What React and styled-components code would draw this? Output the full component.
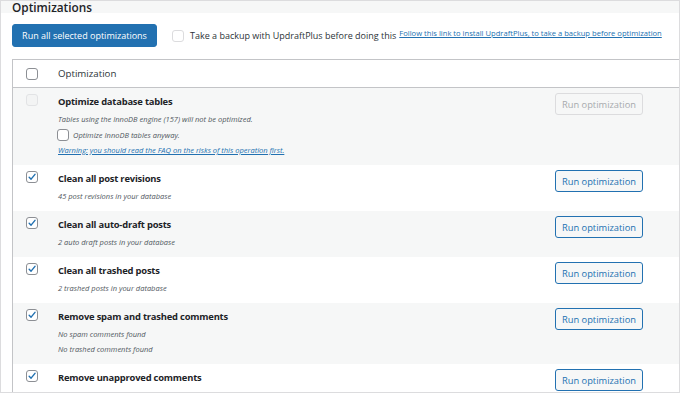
import React from "react";
import styled, { createGlobalStyle } from "styled-components";

const Global = createGlobalStyle`
  html, body { margin: 0; padding: 0; background: #fff; }
  body { font-family: "Open Sans", "Noto Sans", sans-serif; color: #1d2327; }
  * { box-sizing: border-box; }
`;

const Frame = styled.div`
  width: 680px;
  height: 393px;
  overflow: hidden;
  border: 1px solid #dcdcde;
  background: #fff;
  display: flex;
  flex-direction: column;
`;

const TitleBand = styled.div`
  flex: none;
  height: 12px;
  background: #f6f7f7;
  padding-left: 11px;
`;

const Title = styled.h2`
  margin: 0;
  font-size: 11.8px;
  font-weight: 600;
  line-height: 12px;
  color: #1d2327;
`;

const Actions = styled.div`
  flex: none;
  display: flex;
  align-items: flex-start;
  padding: 11px 0 0 11px;
  height: 46px;
`;

const PrimaryButton = styled.button`
  flex: none;
  height: 23px;
  width: 145px;
  background: #2271b1;
  border: 1px solid #2271b1;
  border-radius: 3px;
  color: #fff;
  font-family: inherit;
  font-size: 9px;
  white-space: nowrap;
  padding: 0;
  margin-right: 15px;
`;

const BackupLabel = styled.label`
  flex: none;
  display: flex;
  align-items: center;
  height: 23px;
  font-size: 9px;
  color: #2c3338;
  white-space: nowrap;
`;

const TopLink = styled.a`
  flex: none;
  font-size: 7.6px;
  color: #2271b1;
  text-decoration: underline;
  white-space: nowrap;
  margin-left: 3px;
  line-height: 23px;
  position: relative;
  top: -2px;
`;

const Box = styled.span`
  width: ${(p) => p.$size || 12}px;
  height: ${(p) => p.$size || 12}px;
  flex: none;
  border: 1px solid ${(p) => (p.$disabled ? "#e2e3e5" : p.$faint ? "#dcdcde" : "#8c8f94")};
  border-radius: 3px;
  background: ${(p) => (p.$disabled ? "#f3f4f4" : "#fff")};
  display: inline-flex;
  align-items: center;
  justify-content: center;
  margin-right: ${(p) => p.$gap || 0}px;
`;

const Table = styled.div`
  flex: none;
  margin-left: 11px;
  margin-right: -22px;
  border: 1px solid #c3c4c7;
  border-bottom: none;
`;

const Head = styled.div`
  display: grid;
  grid-template-columns: 32px 1fr;
  align-items: center;
  height: 28px;
  padding-left: 13px;
  border-bottom: 1px solid #c3c4c7;
  font-size: 9.7px;
  color: #2c3338;
`;

const Row = styled.div`
  display: grid;
  grid-template-columns: 32px 1fr auto;
  padding: 6px 57px 7px 13px;
  background: ${(p) => (p.$alt ? "#f6f7f7" : "#fff")};
`;

const Content = styled.div`
  display: flex;
  flex-direction: column;
`;

const RowTitle = styled.div`
  font-size: 9.4px;
  font-weight: 700;
  letter-spacing: -0.2px;
  line-height: 16px;
  color: #1d2327;
  margin-bottom: 2px;
`;

const Sub = styled.div`
  font-size: 7.5px;
  font-style: italic;
  line-height: 15px;
  color: #50575e;
  display: flex;
  align-items: center;
`;

const SubCheck = styled(Sub)`
  line-height: 16px;
  margin-left: -1px;
`;

const SubLink = styled.a`
  font-size: 7.5px;
  font-style: italic;
  line-height: 15px;
  color: #2271b1;
  text-decoration: underline;
`;

const RunButton = styled.button`
  width: 88px;
  height: 22px;
  margin-top: -1px;
  border: 1px solid ${(p) => (p.disabled ? "#dcdcde" : "#2271b1")};
  border-radius: 3px;
  background: #f6f7f7;
  color: ${(p) => (p.disabled ? "#a7aaad" : "#2271b1")};
  font-family: inherit;
  font-size: 9.3px;
  white-space: nowrap;
  padding: 0;
`;

const Check = () => (
  <svg width="12" height="12" viewBox="0 0 12 12">
    <path d="M2.6 6.2 L4.9 8.6 L9.6 2.8" fill="none" stroke="#2271b1" strokeWidth="1.7" strokeLinecap="round" strokeLinejoin="round" />
  </svg>
);

const rows = [
  { title: "Clean all post revisions", subs: ["45 post revisions in your database"] },
  { title: "Clean all auto-draft posts", subs: ["2 auto draft posts in your database"] },
  { title: "Clean all trashed posts", subs: ["2 trashed posts in your database"] },
  { title: "Remove spam and trashed comments", subs: ["No spam comments found", "No trashed comments found"] },
  { title: "Remove unapproved comments", subs: [] },
];

export default function App() {
  return (
    <>
      <Global />
      <Frame>
        <TitleBand>
          <Title>Optimizations</Title>
        </TitleBand>
        <Actions>
          <PrimaryButton>Run all selected optimizations</PrimaryButton>
          <BackupLabel>
            <Box $faint $gap={6} />
            Take a backup with UpdraftPlus before doing this
          </BackupLabel>
          <TopLink href="#">Follow this link to install UpdraftPlus, to take a backup before optimization</TopLink>
        </Actions>
        <Table>
          <Head>
            <Box />
            <span>Optimization</span>
          </Head>
          <Row $alt>
            <Box $disabled />
            <Content>
              <RowTitle>Optimize database tables</RowTitle>
              <Sub>Tables using the InnoDB engine (157) will not be optimized.</Sub>
              <SubCheck>
                <Box $gap={4} />
                Optimize InnoDB tables anyway.
              </SubCheck>
              <SubLink href="#">Warning: you should read the FAQ on the risks of this operation first.</SubLink>
            </Content>
            <RunButton disabled>Run optimization</RunButton>
          </Row>
          {rows.map((r, i) => (
            <Row key={r.title} $alt={i % 2 === 1}>
              <Box>
                <Check />
              </Box>
              <Content>
                <RowTitle>{r.title}</RowTitle>
                {r.subs.map((s) => (
                  <Sub key={s}>{s}</Sub>
                ))}
              </Content>
              <RunButton>Run optimization</RunButton>
            </Row>
          ))}
        </Table>
      </Frame>
    </>
  );
}
